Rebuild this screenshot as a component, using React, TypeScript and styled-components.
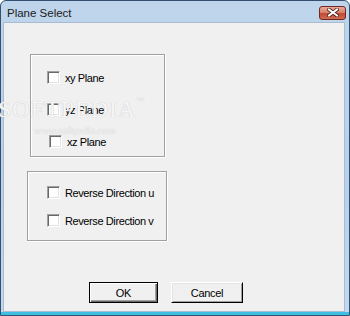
import React from 'react';
import styled, { createGlobalStyle } from 'styled-components';

const GlobalStyle = createGlobalStyle`
  html, body {
    margin: 0;
    padding: 0;
    background: #ffffff;
  }
`;

const Window = styled.div`
  position: relative;
  width: 350px;
  height: 316px;
  box-sizing: border-box;
  border: 1px solid #34506f;
  border-radius: 6px 6px 0 0;
  background: linear-gradient(to bottom, #bfd5ec 0%, #b9d0e9 60%, #c4d9ee 100%);
  box-shadow: inset 0 -3px 0 #3dbfe4;
  display: flex;
  flex-direction: column;
  font-family: "Liberation Sans", Arial, sans-serif;
`;

const TitleBar = styled.div`
  height: 21px;
  display: flex;
  align-items: center;
  justify-content: space-between;
  padding: 0 3px 0 6px;
`;

const Title = styled.span`
  font-size: 11.5px;
  color: #1b1b1b;
  margin-top: 3px;
`;

const CloseButton = styled.button`
  width: 27px;
  height: 14px;
  margin-top: 2px;
  padding: 0;
  border: 1px solid #6e2a22;
  border-radius: 3px;
  background: linear-gradient(to bottom, #eba898 0%, #d9826e 45%, #c04a33 55%, #d36a4f 100%);
  display: flex;
  align-items: center;
  justify-content: center;
`;

const Client = styled.div`
  position: relative;
  flex: 1;
  margin: 0 4px 3px 2px;
  background: #f0f0f0;
  border: 1px solid #a8bbd0;
  display: flex;
  flex-direction: column;
  align-items: flex-start;
  font-size: 11px;
  letter-spacing: -0.4px;
  color: #000;
`;

const GroupBox = styled.div<{ $left: number; $top: number; $w: number; $h: number; $padTop: number; $padLeft: number; $gap: number }>`
  box-sizing: border-box;
  margin-left: ${p => p.$left}px;
  margin-top: ${p => p.$top}px;
  width: ${p => p.$w}px;
  height: ${p => p.$h}px;
  border: 1px solid #a0a0a0;
  box-shadow: inset 1px 1px 0 #ffffff, 1px 1px 0 #ffffff;
  padding: ${p => p.$padTop}px 0 0 ${p => p.$padLeft}px;
  display: flex;
  flex-direction: column;
  gap: ${p => p.$gap}px;
`;

const CheckRow = styled.label<{ $shift?: number }>`
  display: flex;
  align-items: center;
  gap: 5px;
  height: 13px;
  margin-left: ${p => p.$shift || 0}px;
`;

const Box = styled.span`
  box-sizing: border-box;
  width: 13px;
  height: 13px;
  background: #ffffff;
  border-top: 1px solid #a0a0a0;
  border-left: 1px solid #a0a0a0;
  border-right: 1px solid #ffffff;
  border-bottom: 1px solid #ffffff;
  box-shadow: inset 1px 1px 0 #696969, inset -1px -1px 0 #e3e3e3;
`;

const ButtonRow = styled.div`
  display: flex;
  gap: 13px;
  margin-top: 41px;
  margin-left: 85px;
`;

const PushButton = styled.button<{ $default?: boolean; $w: number }>`
  box-sizing: border-box;
  width: ${p => p.$w}px;
  height: 21px;
  padding: 0;
  background: #f0f0f0;
  font-family: "Liberation Sans", Arial, sans-serif;
  font-size: 11px;
  letter-spacing: -0.3px;
  color: #000;
  border: 1px solid;
  border-color: ${p => (p.$default ? '#000' : '#ffffff #000 #000 #ffffff')};
  box-shadow: ${p =>
    p.$default
      ? 'inset 1px 1px 0 #ffffff, inset -1px -1px 0 #696969, inset -2px -2px 0 #a0a0a0'
      : 'inset 1px 1px 0 #e3e3e3, inset -1px -1px 0 #a0a0a0'};
`;

const Watermark = styled.div`
  position: absolute;
  left: -6px;
  top: 73px;
  font-family: "Liberation Serif", "Times New Roman", serif;
  font-size: 24px;
  letter-spacing: 1px;
  color: #f6f6f6;
  text-shadow: 0 0 1px #b8b8b8;
  pointer-events: none;
  sup {
    font-size: 8px;
    vertical-align: top;
    font-family: "Liberation Sans", Arial, sans-serif;
  }
`;

const WatermarkUrl = styled.div`
  position: absolute;
  left: 30px;
  top: 101px;
  font-family: "Liberation Serif", "Times New Roman", serif;
  font-size: 11px;
  color: #f4f4f4;
  text-shadow: 0 0 1px #bdbdbd;
  pointer-events: none;
`;

const Check: React.FC<{ label: string; shift?: number }> = ({ label, shift }) => (
  <CheckRow $shift={shift}>
    <Box />
    <span>{label}</span>
  </CheckRow>
);

const App: React.FC = () => (
  <Window>
    <GlobalStyle />
    <TitleBar>
      <Title>Plane Select</Title>
      <CloseButton aria-label="Close">
        <svg width="12" height="9" viewBox="0 0 12 9">
          <path d="M2 1.5 L10 7.5 M10 1.5 L2 7.5" stroke="#4a1a14" strokeWidth="3.6" strokeLinecap="square" />
          <path d="M2 1.5 L10 7.5 M10 1.5 L2 7.5" stroke="#ffffff" strokeWidth="2" strokeLinecap="square" />
        </svg>
      </CloseButton>
    </TitleBar>
    <Client>
      <GroupBox $left={26} $top={31} $w={135} $h={103} $padTop={16} $padLeft={16} $gap={19}>
        <Check label="xy Plane" />
        <Check label="yz Plane" />
        <Check label="xz Plane" shift={2} />
      </GroupBox>
      <GroupBox $left={23} $top={14} $w={140} $h={70} $padTop={14} $padLeft={19} $gap={15}>
        <Check label="Reverse Direction u" />
        <Check label="Reverse Direction v" />
      </GroupBox>
      <ButtonRow>
        <PushButton $default $w={69}>OK</PushButton>
        <PushButton $w={72}>Cancel</PushButton>
      </ButtonRow>
      <Watermark>
        SOFTPEDIA<sup>™</sup>
      </Watermark>
      <WatermarkUrl>www.softpedia.com</WatermarkUrl>
    </Client>
  </Window>
);

export default App;
